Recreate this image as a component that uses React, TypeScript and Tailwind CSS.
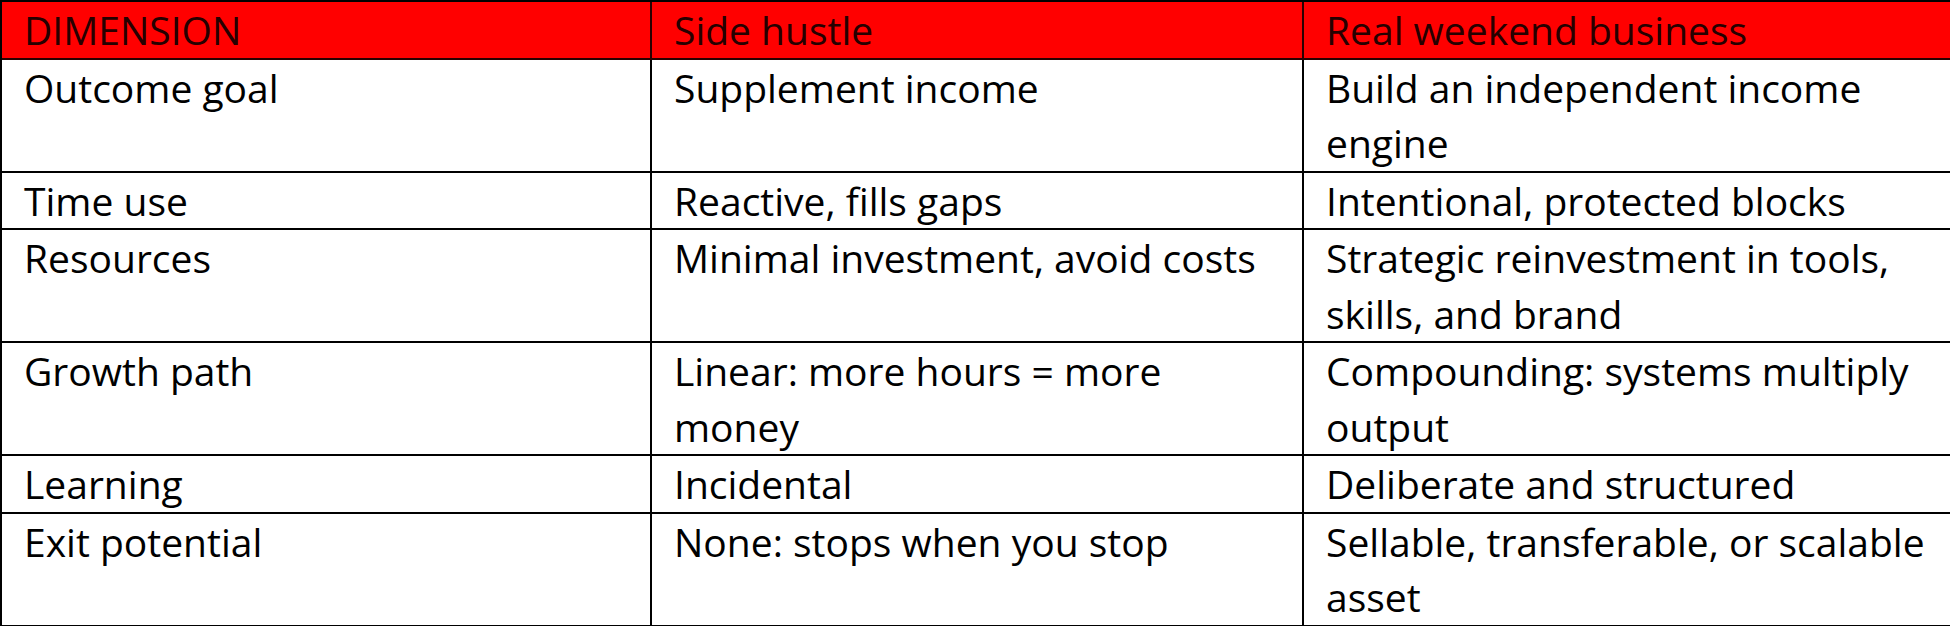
import React from 'react';

// Comparison table: side hustle vs. a real weekend business
type Row = {
  dimension: string;
  hustle: string[];
  business: string[];
};

const rows: Row[] = [
  { dimension: 'Outcome goal', hustle: ['Supplement income'], business: ['Build an independent income', 'engine'] },
  { dimension: 'Time use', hustle: ['Reactive, fills gaps'], business: ['Intentional, protected blocks'] },
  { dimension: 'Resources', hustle: ['Minimal investment, avoid costs'], business: ['Strategic reinvestment in tools,', 'skills, and brand'] },
  { dimension: 'Growth path', hustle: ['Linear: more hours = more', 'money'], business: ['Compounding: systems multiply', 'output'] },
  { dimension: 'Learning', hustle: ['Incidental'], business: ['Deliberate and structured'] },
  { dimension: 'Exit potential', hustle: ['None: stops when you stop'], business: ['Sellable, transferable, or scalable', 'asset'] },
];

function Lines({ lines }: { lines: string[] }) {
  return (
    <>
      {lines.map((line, i) => (
        <div key={i}>{line}</div>
      ))}
    </>
  );
}

const cell = 'border-r-2 border-b-2 border-black pl-[22px] whitespace-nowrap overflow-hidden';
const headCell = 'border-r-2 border-b-2 border-[#2a0000] pl-[22px] whitespace-nowrap overflow-hidden';

export default function App() {
  return (
    <div className="w-[1950px] h-[626px] overflow-hidden bg-white">
      <div
        className="w-[1952px] grid grid-cols-[650px_652px_648px] border-l-2 border-t-2 border-black text-[39px] leading-[55.5px] text-black"
        style={{ fontFamily: '"Open Sans", "Noto Sans", sans-serif' }}
      >
        <div className={`${headCell} bg-[#ff0000] text-[#260000]`}>DIMENSION</div>
        <div className={`${headCell} bg-[#ff0000] text-[#260000]`}>Side hustle</div>
        <div className={`${headCell} bg-[#ff0000] text-[#260000]`}>Real weekend business</div>

        {rows.map((row) => (
          <React.Fragment key={row.dimension}>
            <div className={cell}>{row.dimension}</div>
            <div className={cell}>
              <Lines lines={row.hustle} />
            </div>
            <div className={cell}>
              <Lines lines={row.business} />
            </div>
          </React.Fragment>
        ))}
      </div>
    </div>
  );
}
